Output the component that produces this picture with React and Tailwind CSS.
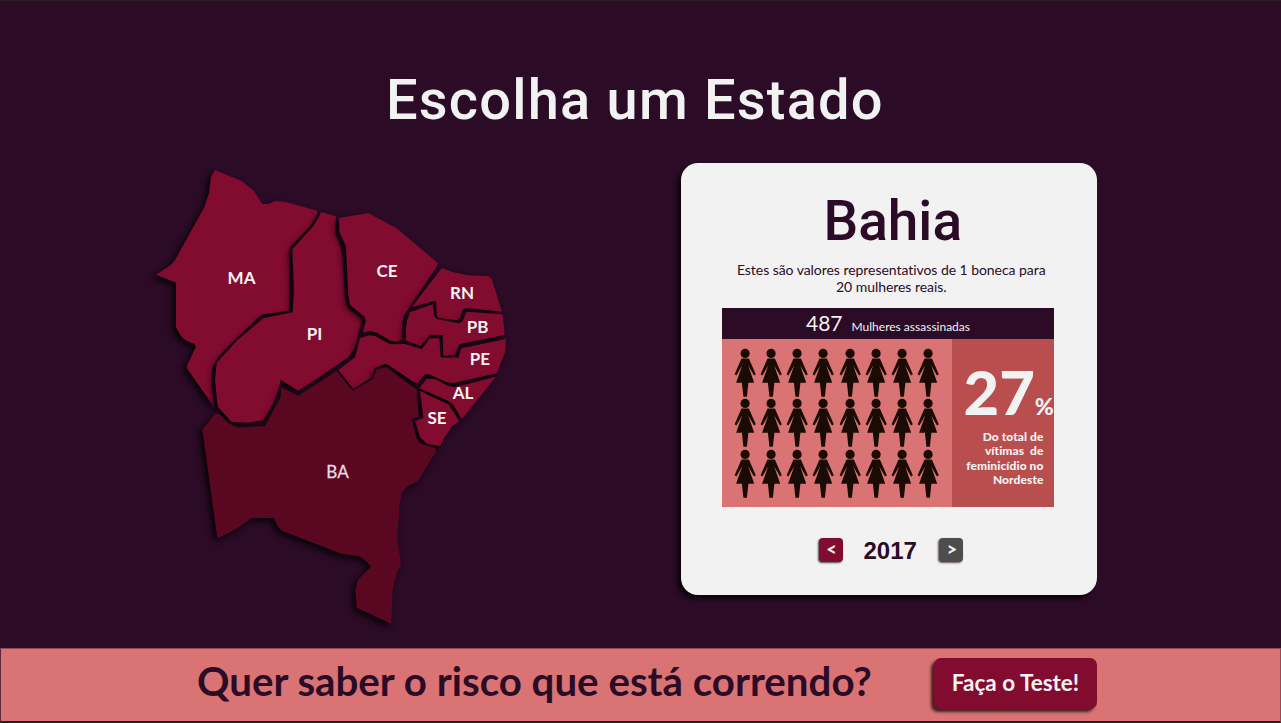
const STATES = [
  { id: "MA", x: 241.5, y: 284, d: "215,170 241.7,181 254,191 262.3,204 268.7,204 275,201 285,201.7 317.3,210.7 317.3,214 310,226.7 289.3,247.7 289,310.7 263.3,314.3 258.3,317.3 236.7,338.3 218.3,356.7 212.3,368.3 211.3,380 212.3,390 214.3,407.3 187.3,369 186.7,366 195.7,347.3 195,344.3 186.7,341 180.7,336 176,327.3 176,282.7 156,274.7 170.7,265 175,260 188.3,236 204,207.7 209,193.3 211,176.7" },
  { id: "PI", x: 314.5, y: 340, d: "321,212 336,216.3 335.3,233.3 340.7,246.7 342.7,261.7 345,298.3 347.7,308.3 360.7,317.7 362,321 358.3,333.3 355,348.3 348.3,357.3 320,376.7 298.3,390.7 280.7,380 277.3,393.3 270.7,408.3 263.3,420 248.3,422.7 231.7,422 217.7,406.7 215,380 216.7,362.7 236.7,340.7 263.3,318.3 292.7,312.3 294,290 292.3,249.3 313.3,226 318.3,218.3" },
  { id: "CE", x: 387, y: 277, d: "339,218 368.3,213 396.7,228.3 437.7,263 436.7,266.7 410,306.7 404,315 402.3,323.3 402.3,339 396.7,341.7 391,341 376.7,332.7 370,331 362.7,332.7 365.7,321 365,317.3 350,305 348.3,295 346,246.7 339.3,231.7" },
  { id: "RN", x: 462, y: 299, d: "441.7,268 453.3,272.3 468.3,275.3 488.3,276 491.7,279 502,311.7 466.7,308 462.7,310 460,318.3 457.3,320.3 438.3,318 436.7,315.7 436,301 431.7,301.7 411.7,307.3" },
  { id: "PB", x: 477.5, y: 333, d: "502.7,314.3 504.7,335 461.7,343.7 459.3,344.3 455,355 443.3,356 442.7,335 430,334.7 421,346 406,340.7 405.7,328.3 407.3,320 410,312.3 432.7,304.3 434.3,315.7 436.7,319 459.3,323.3 462.7,321 466.7,311.7" },
  { id: "PE", x: 480, y: 365, d: "506,339 505.3,351.7 496.7,373.3 453.3,383.3 446.7,382.3 428.3,374 424.3,375 417.7,383.3 413.3,381.7 388.3,365 385,364 375,367.7 371.7,377.7 353.3,389 338.3,370 355,357.3 360,338.3 369.3,335.3 375,336 390,344.3 405,344 421.7,349.3 430,338.3 439.3,338.3 440.7,357.3 458.3,357.7 461.7,348.3" },
  { id: "AL", x: 463, y: 399, d: "495.7,376.7 480,396.7 461.7,419.3 453.3,405 448.3,401 419.3,388.3 426.7,379 435,379 448.3,386 455,387.3" },
  { id: "SE", x: 437, y: 424, d: "420,390.7 435,398.3 448.3,404.3 459.3,421 451.7,426.7 445,436.7 440,446 427.3,444 420,437.3 415,421 423.3,417.7" },
  { id: "BA", x: 337.5, y: 478, active: true, d: "202.3,429.3 215,414 219.3,414 228.3,423.3 238.3,427.7 265,426 280.7,396.7 281.3,387.3 298.3,395.7 336.7,371 352.7,390.7 372.7,379.3 376.7,369.3 386.7,367.3 416.7,390 418.7,416.7 411.7,419 416.7,438.3 420,443.3 435,448.3 436,451.7 417.3,481.7 408.3,485.7 402,492.7 399.3,506.7 397.3,538.3 401,564.3 396.7,573.3 392.7,590 391.3,624 356.7,607.7 355.3,590 357.7,580 371,566.7 366.7,561.7 359.3,556.3 341.7,554 281.7,530.7 277.3,526 274,518 251.7,518 236,529.3 217.3,538.3" },
];

function StateMap() {
  return (
    <svg className="block h-[490px] w-[380px] shrink-0 font-['Lato',sans-serif]" viewBox="140 155 380 490">
      {STATES.map((s) => (
        <polygon
          key={s.id}
          points={s.d}
          className={
            s.active
              ? "fill-[#5a0721] drop-shadow-[-3px_3px_3px_rgba(0,0,0,0.85)]"
              : "fill-[#820b30] drop-shadow-[-3px_3px_3px_rgba(0,0,0,0.85)]"
          }
        />
      ))}
      {STATES.map((s) => (
        <text
          key={s.id}
          x={s.x}
          y={s.y}
          textAnchor="middle"
          className={
            s.active
              ? "fill-[#e6dbe0] stroke-[#e6dbe0] stroke-[0.3px] text-[17px]"
              : "fill-[#f2f2f2] text-[17px] font-bold"
          }
        >
          {s.id}
        </text>
      ))}
    </svg>
  );
}

function Doll() {
  return (
    <svg className="block h-[50.4px] w-[22px] fill-[#1a0b05]" viewBox="0 0 22 50.4">
      <circle cx="11.1" cy="5.4" r="4.6" />
      <path d="M7.5 10.6H14.9L21.8 26.2L20 27.6L14.2 17.4L20.2 34.7H14.4L12.9 48.8H9.4L7.9 34.7H2.1L8.2 17.4L2.4 27.6L.6 26.2Z" />
    </svg>
  );
}

export default function App() {
  return (
    <div className="flex h-[723px] w-[1281px] flex-col overflow-hidden border-t border-[#222226] bg-[#2b0b26] font-['Lato',sans-serif] text-[#2b0b26]">
      <h1 className="h-[154px] pt-[66px] pl-[386px] font-['Roboto',sans-serif] text-[56px] leading-[66px] font-medium tracking-[1.2px] whitespace-nowrap text-[#f2f2f2]">
        Escolha um Estado
      </h1>

      <main className="flex h-[493px] items-start pl-[140px]">
        <StateMap />
        <section className="mt-[7.5px] ml-[160.5px] flex h-[432px] w-[416px] flex-col rounded-[17px] bg-[#f2f2f2] pt-[25.5px] pr-[41px] pl-[41.5px] shadow-[-4px_4px_4px_rgba(0,0,0,0.7)]">
          <h2 className="h-[66px] pl-[8px] text-center font-['Roboto',sans-serif] text-[55px] leading-[66px] font-medium">
            Bahia
          </h2>
          <p className="mt-[7px] h-[47px] pl-[5px] text-center text-[14px] leading-[17px] tracking-[-0.05px] whitespace-nowrap">
            Estes são valores representativos de 1 boneca para
            <br />
            20 mulheres reais.
          </p>
          <div className="flex h-[31px] w-[332px] items-baseline gap-[9px] bg-[#2b0b26] pl-[84px] text-[#f2f2f2]">
            <span className="text-[21px] leading-[29px]">487</span>
            <span className="text-[12px]">Mulheres assassinadas</span>
          </div>
          <div className="flex h-[168px] w-[332px]">
            <div className="grid w-[230px] grid-cols-[repeat(8,26.17px)] content-start bg-[#da7373] pt-[9px] pl-[12px]">
              {Array.from({ length: 24 }, (_, i) => (
                <Doll key={i} />
              ))}
            </div>
            <div className="w-[102px] bg-[#b94e4e] text-[#f2f2f2]">
              <div className="flex h-[91px] items-baseline pt-[15px] pl-[11.5px] leading-[74px]">
                <span className="text-[61.5px] font-black">27</span>
                <span className="text-[23px] font-black">%</span>
              </div>
              <p className="pr-[10.5px] text-right text-[12px] leading-[14.4px] font-black tracking-[0.08px] whitespace-pre">
                {"Do total de\nvítimas  de\nfeminicídio no\nNordeste"}
              </p>
            </div>
          </div>
          <div className="mt-[30px] flex items-center pl-[97px]">
            <button className="h-[24px] w-[24px] rounded-[4px] bg-[#820b30] pb-[2px] pl-[1px] text-[18px] leading-[22px] font-black text-[#f2f2f2] shadow-[-1px_1px_2px_rgba(0,0,0,0.7)]">
              &lt;
            </button>
            <span className="ml-[20.5px] w-[54px] pt-[2px] font-['Liberation_Sans',sans-serif] text-[24px] leading-[24px] font-bold">
              2017
            </span>
            <button className="ml-[21.5px] h-[24px] w-[24px] rounded-[4px] bg-[#4d4d4d] pb-[2px] pl-[2px] text-[18px] leading-[22px] font-black text-[#f2f2f2] shadow-[-1px_1px_2px_rgba(43,11,38,0.7)]">
              &gt;
            </button>
          </div>
        </section>
      </main>

      <footer className="flex h-[75px] items-start border-t border-r border-b-2 border-l border-t-[#914a53] border-r-[#914a53] border-b-[#222226] border-l-[#5a2b40] bg-[#da7373] pl-[196px]">
        <p className="w-[737px] shrink-0 pt-[8px] text-[40.25px] leading-[48px] font-bold whitespace-nowrap">
          Quer saber o risco que está correndo?
        </p>
        <button className="mt-[9px] h-[51px] w-[163px] shrink-0 rounded-[7px] bg-[#820b30] pb-[2px] text-[22.5px] font-bold text-[#f2f2f2] shadow-[-3px_3px_3px_rgba(0,0,0,0.7)]">
          Faça o Teste!
        </button>
      </footer>
    </div>
  );
}
